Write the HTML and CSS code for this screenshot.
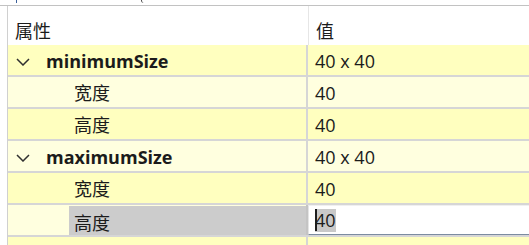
FILE: index.html
```html
<!DOCTYPE html>
<html>
<head>
<meta charset="utf-8">
<link rel="stylesheet" href="styles.css">
</head>
<body>
<div class="top"><span class="mark-a"></span><span class="mark-b"></span></div>
<div class="tree">
  <div class="row header">
    <div class="cell name"><span class="txt">属性</span></div>
    <div class="sep sep-h"></div>
    <div class="cell val"><span class="txt">值</span></div>
  </div>
  <div class="row dark">
    <div class="cell name group"><svg class="chev" width="14" height="8" viewBox="0 0 14 8"><polyline points="1,1 7,7 13,1" fill="none" stroke="#303030" stroke-width="1.5"/></svg><span class="txt bold">minimumSize</span></div>
    <div class="sep"></div>
    <div class="cell val"><span class="txt">40 x 40</span></div>
  </div>
  <div class="row light">
    <div class="cell name child"><span class="txt">宽度</span></div>
    <div class="sep"></div>
    <div class="cell val"><span class="txt">40</span></div>
  </div>
  <div class="row dark">
    <div class="cell name child"><span class="txt">高度</span></div>
    <div class="sep"></div>
    <div class="cell val"><span class="txt">40</span></div>
  </div>
  <div class="row light">
    <div class="cell name group"><svg class="chev" width="14" height="8" viewBox="0 0 14 8"><polyline points="1,1 7,7 13,1" fill="none" stroke="#303030" stroke-width="1.5"/></svg><span class="txt bold">maximumSize</span></div>
    <div class="sep"></div>
    <div class="cell val"><span class="txt">40 x 40</span></div>
  </div>
  <div class="row dark">
    <div class="cell name child"><span class="txt">宽度</span></div>
    <div class="sep"></div>
    <div class="cell val"><span class="txt">40</span></div>
  </div>
  <div class="row light selected">
    <div class="cell name child"><div class="sel"><span class="txt">高度</span></div></div>
    <div class="sep sep-sel"></div>
    <div class="cell val editing"><div class="editor"><span class="caret"></span><span class="seltext">40</span></div></div>
  </div>
  <div class="row dark last">
    <div class="cell name"></div>
    <div class="sep"></div>
    <div class="cell val"></div>
  </div>
</div>
</body>
</html>
```

FILE: styles.css
```css
html, body {
  margin: 0;
  padding: 0;
  background: #ffffff;
}
body {
  width: 529px;
  height: 245px;
  overflow: hidden;
  font-family: "Open Sans", "Noto Sans CJK SC", sans-serif;
  font-size: 18px;
  color: #1b1b1b;
}
.top {
  height: 5px;
  border-bottom: 1px solid #c2c2c2;
  display: flex;
  align-items: flex-start;
}
.mark-a {
  display: block;
  width: 1px;
  height: 3px;
  margin-left: 16px;
  background: #3a5f9a;
}
.mark-b {
  display: block;
  width: 3px;
  height: 3px;
  margin-left: 124px;
  border-left: 1px solid #444;
  border-radius: 0 0 0 3px;
}
.tree {
  margin-left: 7px;
  border-left: 1px solid #d0d0d0;
  display: flex;
  flex-direction: column;
  height: 239px;
  overflow: hidden;
}
.row {
  display: grid;
  grid-template-columns: 298px 2px 1fr;
  height: 30px;
  border-bottom: 2px solid #d6d6d6;
  flex: none;
}
.row.header {
  height: 39px;
  border-bottom: none;
  background: #ffffff;
}
.row.last {
  height: 8px;
  border-bottom: none;
}
.row.dark { background: #ffffbf; }
.row.light { background: #ffffdf; }
.cell {
  display: flex;
  align-items: center;
  overflow: hidden;
  white-space: nowrap;
}
.txt {
  line-height: 20px;
  margin-top: 2px;
}
.header .cell {
  align-items: flex-start;
  padding-top: 15px;
}
.header .txt { margin-top: 0; }
.header .name { padding-left: 7px; }
.header .val { padding-left: 8px; }
.sep { background: #d6d6d6; }
.sep-h {
  background: transparent;
  border-left: 1px solid #e6e6e6;
  margin-left: 2px;
}
.group { padding-left: 8px; }
.chev { flex: none; margin-top: 3px; }
.bold {
  font-weight: 700;
  margin-left: 16px;
}
.child { padding-left: 66px; }
.val { padding-left: 7px; }
.selected .child { padding-left: 61px; }
.sel {
  flex: 1;
  align-self: stretch;
  background: #cccccc;
  display: flex;
  align-items: center;
  padding-left: 5px;
  margin-top: 1px;
  margin-bottom: -2px;
}
.sep-sel { background: #c4c4c4; }
.editing {
  padding-left: 0;
  align-items: stretch;
}
.editor {
  flex: 1;
  background: #ffffff;
  border-left: 1px solid #e4e4e4;
  border-top: 1px solid #f0f0f0;
  border-bottom: 1px solid #7c8ca0;
  display: flex;
  align-items: center;
  padding-left: 6px;
}
.caret {
  width: 2px;
  height: 22px;
  background: #1e1e1e;
  margin-right: -2px;
  position: relative;
  z-index: 1;
}
.seltext {
  background: #c9c9c9;
  line-height: 23px;
  margin-top: 1px;
}
```
